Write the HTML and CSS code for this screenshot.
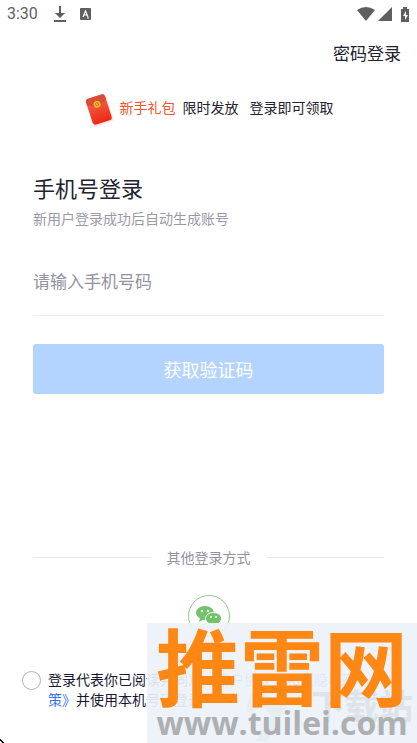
FILE: index.html
```html
<!DOCTYPE html>
<html lang="zh-CN">
<head>
<meta charset="utf-8">
<meta name="viewport" content="width=device-width, initial-scale=1">
<title>手机号登录</title>
<link rel="stylesheet" href="styles.css">
</head>
<body>
<div class="screen">
  <header class="status">
    <span class="time">3:30</span>
    <svg class="download" width="12" height="16" viewBox="0 0 12 16" aria-hidden="true"><path d="M5 0h2v7h4l-5 5-5-5h4zM0 14h12v2H0z"/></svg>
    <svg class="letter" width="11" height="12" viewBox="0 0 11 12" aria-hidden="true"><rect width="11" height="12" rx="1"/><path d="M3 9l2.500-6L8 9M4 7h3M7 10h2" fill="none" stroke="#fff" stroke-width="1.200"/></svg>
    <span class="spacer"></span>
    <svg width="18" height="14" viewBox="0 0 18 14" aria-hidden="true"><path d="M0 3Q9-3 18 3L9 14z"/></svg>
    <svg class="signal" width="14" height="14" viewBox="0 0 14 14" aria-hidden="true"><path d="M14 0v14H0z"/></svg>
    <svg class="battery" width="8" height="15" viewBox="0 0 8 15" aria-hidden="true"><path d="M2 0h4v2h2v13H0V2h2z"/><path d="M5 4L2 9h2v4l3-5H5z" fill="#fff"/></svg>
  </header>
  <nav class="top"><a href="#password">密码登录</a></nav>
  <p class="promo">
    <svg width="30" height="34" viewBox="0 0 30 34" aria-hidden="true">
      <defs><linearGradient id="red" x1="0" y1="0" x2="0" y2="1"><stop offset="0" stop-color="#f4694f"/><stop offset="1" stop-color="#ed2814"/></linearGradient></defs>
      <g transform="rotate(-18 15 17)"><rect x="5" y="5" width="21" height="27" rx="3" fill="#fde6e3"/><rect x="5" y="3" width="20" height="27" rx="3" fill="url(#red)"/><path d="M5 9V6q0-3 3-3h14q3 0 3 3v3q-10 7-20 0z" fill="#dc4b35"/><circle cx="15" cy="11" r="3.500" fill="#f2b62f"/><circle cx="15" cy="11" r="1.500" fill="none" stroke="#b66b18" stroke-width=".7"/></g>
    </svg>
    <span class="gift">新手礼包</span><span>限时发放</span><span class="claim">登录即可领取</span>
  </p>
  <main class="content">
    <h1>手机号登录</h1>
    <p class="hint">新用户登录成功后自动生成账号</p>
    <form>
      <input class="phone" type="tel" placeholder="请输入手机号码" aria-label="手机号码">
      <button class="submit" type="button">获取验证码</button>
    </form>
    <div class="other"><span>其他登录方式</span></div>
    <button class="wechat" type="button" aria-label="微信登录">
      <svg width="26" height="22" viewBox="0 0 26 22" aria-hidden="true"><path d="M9 1c5 0 9 3 9 7s-4 7-9 7l-2-.300L3 17l1-3.500C2 12 0 10 0 8c0-4 4-7 9-7z"/><circle cx="6" cy="6" r="1.200" fill="#fff"/><circle cx="12" cy="6" r="1.200" fill="#fff"/><path d="M17.500 7.500c4.500 0 8 2.500 8 6 0 2-1 3.500-2.500 4.500l1 2.500-3.500-1.500-3 .500c-4.500 0-8-2.500-8-6s3.500-6 8-6z" stroke="#fff"/><circle cx="15" cy="12" r="1" fill="#fff"/><circle cx="20" cy="12" r="1" fill="#fff"/></svg>
    </button>
  </main>
  <footer class="agree">
    <input type="checkbox" id="agree">
    <label for="agree">登录代表你已阅读并同意<a href="#terms">《用户协议》</a>和<a href="#privacy">《隐私政策》</a>并使用本机号码登录</label>
  </footer>
  <svg class="corner" width="4" height="5" viewBox="0 0 4 5" aria-hidden="true"><path d="M0 1h1v1h1v1h1v1h1v1H2V4H1V3H0z"/></svg>
  <aside class="mark">
    <svg class="leaf" width="44" height="58" viewBox="0 0 44 58" aria-hidden="true"><path d="M20 0Q-4 8 1 28l15-6 8 8L8 56h12l20-34Q44 6 36 0L22 18z"/></svg>
    <span class="station">下载站</span>
    <span class="brand">推雷网</span>
    <span class="site">www.tuilei.com</span>
  </aside>
</div>
</body>
</html>
```

FILE: styles.css
```css
* { box-sizing: border-box; }
body {
  margin: 0;
  background: #fff;
  color: #22222e;
  font-family: "Noto Sans CJK SC", sans-serif;
}
h1, p { margin: 0; font-weight: 400; }
a { color: inherit; text-decoration: none; }
.screen {
  position: relative;
  display: flex;
  flex-direction: column;
  min-height: 100vh;
  overflow: hidden;
}
.status {
  display: flex;
  align-items: center;
  height: 28px;
  padding: 0 8px 0 7px;
  color: #5f5f5f;
  fill: #5f5f5f;
}
.time { font: 16px/20px Roboto, sans-serif; }
.download { margin-left: 16px; }
.letter { margin-left: 14px; }
.spacer { flex: 1; }
.signal { margin-left: 3px; }
.battery { margin-left: 9px; }
.top {
  padding: 13px 16px 0;
  text-align: right;
  font-size: 17px;
  line-height: 24px;
}
.promo {
  display: flex;
  align-items: center;
  justify-content: center;
  height: 34px;
  margin-top: 28px;
  font-size: 14px;
  line-height: 20px;
}
.promo span { margin-bottom: 6px; }
.promo .gift { margin-left: 6px; margin-right: 7px; color: #f2552c; }
.promo .claim { margin-left: 11px; }
.content { padding: 0 33px; }
h1 { margin-top: 44px; font-size: 22px; line-height: 32px; }
.hint { margin-top: 5px; font-size: 14px; line-height: 20px; color: #9a9aa6; }
form { display: flex; flex-direction: column; }
.phone {
  width: 100%;
  height: 68px;
  margin-top: 20px;
  padding: 0 0 2px;
  border: 0;
  border-bottom: 1px solid #f0f0f0;
  background: none;
  color: inherit;
  font: 17px/24px "Noto Sans CJK SC", sans-serif;
}
.phone::placeholder { color: #9292a0; opacity: 1; }
.submit {
  height: 50px;
  margin-top: 28px;
  border: 0;
  border-radius: 3px;
  background: #b3d4ff;
  color: #fff;
  font: 18px/26px "Noto Sans CJK SC", sans-serif;
}
.other {
  display: flex;
  align-items: center;
  gap: 16px;
  margin-top: 153px;
  color: #9292a0;
  font-size: 14px;
  line-height: 20px;
}
.other::before, .other::after { content: ""; flex: 1; height: 1px; background: #ebebee; }
.wechat {
  display: flex;
  align-items: center;
  justify-content: center;
  width: 42px;
  height: 42px;
  margin: 28px auto 0;
  padding: 0;
  border: 1px solid #8bcf86;
  border-radius: 50%;
  background: #fff;
  fill: #72c46c;
}
.agree {
  display: flex;
  align-items: flex-start;
  gap: 7px;
  margin-top: 32px;
  padding: 0 48px 0 22px;
  color: #171733;
  font-size: 14px;
  line-height: 20px;
}
.agree input {
  flex: none;
  appearance: none;
  width: 19px;
  height: 19px;
  margin: 2px 0 0;
  border: 1px solid #b2b2ba;
  border-radius: 50%;
}
.agree a { color: #3875f6; }
.corner { position: absolute; left: 0; bottom: 0; }
.mark {
  position: absolute;
  right: 0;
  bottom: 0;
  display: flex;
  flex-direction: column;
  align-items: center;
  width: 270px;
  height: 120px;
  background: rgba(237, 242, 250, .92);
  white-space: nowrap;
}
.brand { position: relative; color: #ff8714; font-size: 84px; font-weight: 700; line-height: 82px; }
.site { position: relative; color: #adafb1; font: 700 32px/36px "Open Sans", sans-serif; }
.station {
  position: absolute;
  right: 4px;
  bottom: 18px;
  color: #dde3e9;
  font-size: 34px;
  font-weight: 700;
  line-height: 40px;
}
.leaf { position: absolute; left: 100px; bottom: 0; fill: #e5eff2; }
```
